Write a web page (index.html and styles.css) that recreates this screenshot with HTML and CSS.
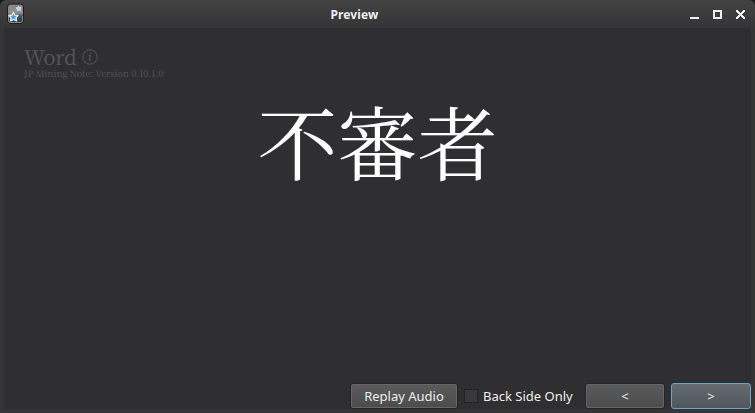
FILE: index.html
```html
<!DOCTYPE html>
<html lang="ja">
<head>
<meta charset="utf-8">
<title>Preview</title>
<link rel="stylesheet" href="styles.css">
</head>
<body>
<div class="window">
  <header class="titlebar">
    <svg class="app-icon" width="18" height="22" viewBox="0 0 18 22">
      <defs>
        <linearGradient id="tile" x1="0" y1="0" x2="0" y2="1">
          <stop offset="0" stop-color="#707070"/><stop offset=".45" stop-color="#909090"/><stop offset=".6" stop-color="#505050"/><stop offset="1" stop-color="#333"/>
        </linearGradient>
      </defs>
      <rect x=".5" y="1" width="16" height="19.500" rx="3" fill="url(#tile)" stroke="#1d1d1d"/>
      <path d="M1.500 4Q1.500 2 3.500 2H13.500Q15.500 2 15.500 4V12Q11 8 1.500 10Z" fill="#999" opacity=".5"/>
      <path d="M1.500 12V17.500Q1.500 19.500 3.500 19.500H13.500Q15.500 19.500 15.500 17.500V13" fill="none" stroke="#888"/>
      <path d="M6.400 9.500L7.900 12.200 11.100 12.400 9 14.700 9.600 17.800 6.700 16.500 3.700 17.800 4 14.700 1.900 12.500 5 12Z" fill="#48a5e4" stroke="#e5f2fb" stroke-width="1.300" stroke-linejoin="round"/>
      <path d="M11.500 3.300L12.400 4.700 14.100 4.600 13 5.900 13.500 7.400 11.800 6.900 10.200 7.700 10.400 6 9.100 5 10.800 4.700Z" fill="#a5cfe9" stroke="#e5edf2" stroke-width=".8" stroke-linejoin="round"/>
    </svg>
    <h1 class="title">Preview</h1>
    <svg class="controls" width="56" height="10" viewBox="0 0 56 10" shape-rendering="crispEdges">
      <path d="M0 7H9V9H0Z" fill="#eee"/>
      <path d="M24 1H31V8H24Z" fill="none" stroke="#eee" stroke-width="2"/>
      <path d="M46 0H48V1H49V2H50V3H51V2H52V1H53V0H55V2H54V3H53V4H52V5H53V6H54V7H55V9H53V8H52V7H51V6H50V7H49V8H48V9H46V7H47V6H48V5H49V4H48V3H47V2H46Z" fill="#eee"/>
    </svg>
  </header>
  <main class="content">
    <section class="card">
      <div class="card-type">Word
        <svg width="16" height="16" viewBox="0 0 16 16" fill="none" stroke="#58585a">
          <circle cx="8" cy="8" r="7.200"/><path d="M6.500 6.700L8.500 6.500L7.300 11.200Q7.300 12.200 9.200 10.900"/><circle cx="8.900" cy="4.200" r=".8" fill="#58585a" stroke="none"/>
        </svg>
      </div>
      <div class="version">JP Mining Note: Version 0.10.1.0</div>
      <div class="expression">不審者</div>
    </section>
    <footer class="toolbar">
      <button class="button replay">Replay Audio</button>
      <label class="option"><span class="checkbox"></span>Back Side Only</label>
      <button class="button previous">&lt;</button>
      <button class="button next">&gt;</button>
    </footer>
  </main>
</div>
</body>
</html>
```
FILE: styles.css
```css
* { box-sizing: border-box; }
body { margin: 0; background: #171717; overflow: hidden; }
.window {
  width: 755px;
  height: 413px;
  display: flex;
  flex-direction: column;
  padding: 0 4px 4px;
  border-radius: 6px 6px 0 0;
  background: linear-gradient(#424242 0, #353535 28px, #353535 100%);
  font-family: "Noto Sans", sans-serif;
  font-size: 13px;
  color: #eee;
}
.titlebar {
  height: 28px;
  flex: none;
  display: grid;
  grid-template-columns: 100px 1fr 100px;
  align-items: center;
  padding: 0 5px 0 3px;
}
.title { margin: 2px 0 0; font-size: 12px; line-height: 20px; font-weight: 700; letter-spacing: .12px; text-align: center; transform: translateX(-22px); }
.controls { justify-self: end; margin-top: 2px; }
.content {
  flex: 1;
  display: flex;
  flex-direction: column;
  background: #2f2f31;
}
.card { flex: 1; padding: 17px 20px 0; font-family: "Noto Serif CJK JP", "Noto Serif", serif; color: #58585a; }
.card-type { display: flex; align-items: center; gap: 5px; height: 24px; font-size: 20px; line-height: 24px; }
.card-type svg { margin-top: 0; }
.version { height: 11px; font-size: 9px; line-height: 10px; white-space: nowrap; }
.expression {
  margin-top: 15px;
  text-align: center;
  color: #fff;
  font-family: "Noto Serif CJK JP", "Noto Serif JP", "Noto Sans CJK JP", serif;
  font-size: 80px;
  line-height: 90px;
}
.toolbar { flex: none; height: 26px; display: flex; align-items: flex-start; }
.button {
  height: 26px;
  padding: 0;
  border: 1px solid #242424;
  border-radius: 3px;
  background: linear-gradient(#5b5b5b, #4c4c4c);
  box-shadow: inset 0 0 0 1px #666;
  color: #eee;
  font: 13px/22px "Noto Sans", sans-serif;
}
.replay { width: 108px; margin-left: 346px; }
.option { display: flex; align-items: center; height: 26px; margin-left: 6px; gap: 5px; width: 121px; white-space: nowrap; }
.checkbox { width: 14px; height: 14px; border: 1px solid #232325; background: #393939; }
.previous { width: 80px; }
.next { width: 80px; margin-left: 6px; border-color: #62a7cf; background: linear-gradient(#666b6e, #50575d); box-shadow: none; }
```
